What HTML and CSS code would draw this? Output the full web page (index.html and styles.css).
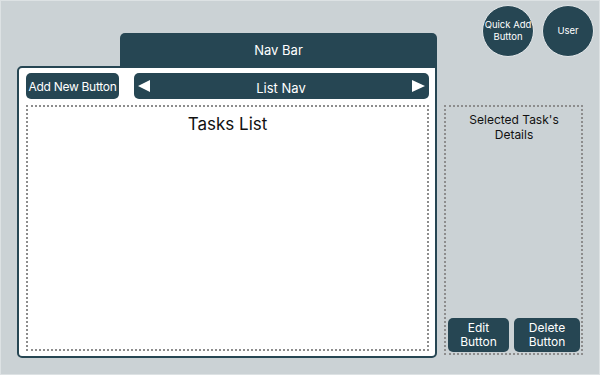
FILE: index.html
```html
<!DOCTYPE html>
<html>
<head>
    <title>Task Planner</title>
    <link rel="stylesheet" href="styles.css">
</head>
<body>
    <div class="page">
        <div class="top">
            <div class="nav-bar">Nav Bar</div>
            <div class="quick-actions">
                <div class="circle-button">Quick Add<br>Button</div>
                <div class="circle-button">User</div>
            </div>
        </div>
        <div class="main">
            <div class="tasks-panel">
                <div class="toolbar">
                    <div class="button add-button">Add New Button</div>
                    <div class="button list-nav">
                        <svg class="arrow" width="12" height="12" viewBox="0 0 12 12"><polygon points="12,0 12,12 0,6" fill="#fff"/></svg>
                        <span class="list-nav-label">List Nav</span>
                        <svg class="arrow" width="13" height="12" viewBox="0 0 13 12"><polygon points="0,0 0,12 13,6" fill="#fff"/></svg>
                    </div>
                </div>
                <div class="tasks-list">
                    <div class="tasks-title">Tasks List</div>
                </div>
            </div>
            <div class="details">
                <div class="details-title">Selected Task's<br>Details</div>
                <div class="details-actions">
                    <div class="button action edit">Edit<br>Button</div>
                    <div class="button action delete">Delete<br>Button</div>
                </div>
            </div>
        </div>
    </div>
</body>
</html>
```

FILE: styles.css
```css
body {
    margin: 0;
    font-family: Inter, "Noto Sans", Arial, sans-serif;
    background-color: #cbd2d5;
}
.page {
    width: 600px;
    height: 375px;
    box-sizing: border-box;
    border: 1px solid #dde2e4;
}
.top {
    display: flex;
    align-items: flex-start;
    height: 65px;
}
.nav-bar {
    margin-top: 32px;
    margin-left: 119px;
    width: 317px;
    height: 33px;
    background-color: #264653;
    border-radius: 5px 5px 0 0;
    color: #fff;
    font-size: 13px;
    display: flex;
    align-items: center;
    justify-content: center;
}
.quick-actions {
    margin-left: auto;
    margin-right: 5px;
    margin-top: 4px;
    display: flex;
    gap: 8px;
}
.circle-button {
    width: 50px;
    height: 50px;
    border-radius: 50%;
    border: 1px solid #e4e8ea;
    background-color: #264653;
    color: #fff;
    font-size: 9.5px;
    line-height: 12px;
    display: flex;
    align-items: center;
    justify-content: center;
    text-align: center;
}
.main {
    display: flex;
    align-items: flex-start;
    padding-left: 16px;
    gap: 7px;
}
.tasks-panel {
    width: 420px;
    height: 292px;
    box-sizing: border-box;
    background-color: #fff;
    border: 2px solid #264653;
    border-radius: 5px 0 5px 5px;
    padding: 5px 6px 5px 7px;
    display: flex;
    flex-direction: column;
    gap: 6px;
}
.toolbar {
    display: flex;
    gap: 15px;
    height: 26px;
}
.button {
    background-color: #264653;
    color: #fff;
    border-radius: 5px;
    font-size: 12px;
    display: flex;
    align-items: center;
    justify-content: center;
    text-align: center;
}
.add-button {
    width: 93px;
    white-space: nowrap;
    letter-spacing: -0.3px;
}
.list-nav {
    flex: 1;
    justify-content: space-between;
    padding: 0 4px;
    font-size: 13px;
}
.list-nav-label {
    padding-top: 4px;
}
.tasks-list {
    flex: 1;
    border: 2px dotted #8d8d8d;
    text-align: center;
}
.tasks-title {
    margin-top: 7px;
    font-size: 17px;
    color: #111;
}
.details {
    margin-top: 39px;
    width: 139px;
    height: 250px;
    box-sizing: border-box;
    border: 2px dotted #8d8d8d;
    display: flex;
    flex-direction: column;
    padding: 0 1px 1px 2px;
}
.details-title {
    margin-top: 6px;
    text-align: center;
    font-size: 12px;
    line-height: 14.5px;
    color: #111;
}
.details-actions {
    margin-top: auto;
    display: flex;
    gap: 5px;
}
.action {
    height: 34px;
    line-height: 14.5px;
}
.edit {
    width: 61px;
}
.delete {
    flex: 1;
}
```
